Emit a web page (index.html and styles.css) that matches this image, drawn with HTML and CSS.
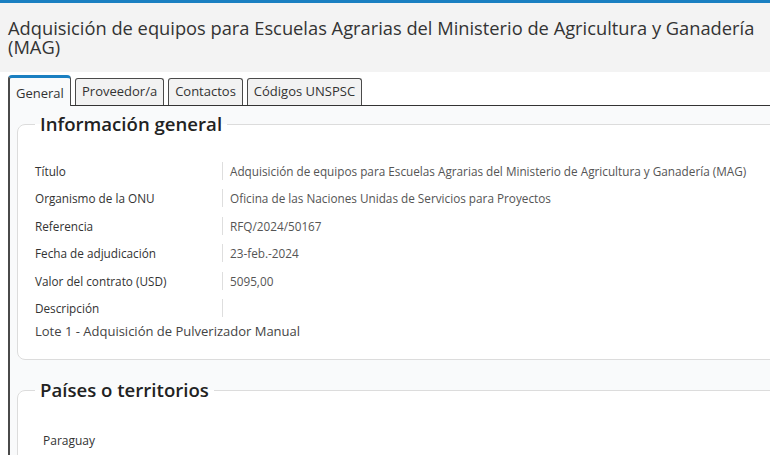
FILE: index.html
```html
<!DOCTYPE html>
<html lang="es">
<head>
<meta charset="utf-8">
<title>Adquisición de equipos</title>
<link rel="stylesheet" href="styles.css">
</head>
<body>
<div class="topbar"></div>
<header class="header">
  <h1 class="title">Adquisición de equipos para Escuelas Agrarias del Ministerio de Agricultura y Ganadería (MAG)</h1>
</header>
<nav class="tabs">
  <div class="tab active">General</div>
  <div class="tab">Proveedor/a</div>
  <div class="tab">Contactos</div>
  <div class="tab">Códigos UNSPSC</div>
</nav>
<main class="panel">
  <fieldset class="box">
    <legend class="legend">Información general</legend>
    <div class="rows">
      <div class="row"><div class="label">Título</div><div class="value">Adquisición de equipos para Escuelas Agrarias del Ministerio de Agricultura y Ganadería (MAG)</div></div>
      <div class="row"><div class="label">Organismo de la ONU</div><div class="value">Oficina de las Naciones Unidas de Servicios para Proyectos</div></div>
      <div class="row"><div class="label">Referencia</div><div class="value">RFQ/2024/50167</div></div>
      <div class="row"><div class="label">Fecha de adjudicación</div><div class="value">23-feb.-2024</div></div>
      <div class="row"><div class="label">Valor del contrato (USD)</div><div class="value">5095,00</div></div>
      <div class="row"><div class="label">Descripción</div><div class="value"></div></div>
    </div>
    <p class="desc">Lote 1 - Adquisición de Pulverizador Manual</p>
  </fieldset>
  <fieldset class="box box2">
    <legend class="legend">Países o territorios</legend>
    <ul class="countries">
      <li>Paraguay</li>
    </ul>
  </fieldset>
</main>
</body>
</html>
```

FILE: styles.css
```css
html, body {
  margin: 0;
  padding: 0;
  overflow: hidden;
  background: #ffffff;
}
body {
  font-family: "Open Sans", "DejaVu Sans", sans-serif;
  color: #333;
  width: 770px;
  height: 455px;
}
.topbar {
  height: 3px;
  background: #1a7fc1;
}
.header {
  background: #f3f3f3;
  padding: 15px 8px 16px 8px;
}
.title {
  margin: 0;
  font-size: 18.3px;
  font-weight: 400;
  line-height: 19px;
  color: #333;
}
.tabs {
  display: flex;
  align-items: flex-end;
  gap: 4px;
  margin: 3px 0 0 8px;
  height: 30px;
  position: relative;
  z-index: 2;
}
.tab {
  box-sizing: border-box;
  height: 27px;
  line-height: 25px;
  padding: 0 6px;
  font-size: 13px;
  color: #333;
  background: #f2f2f2;
  border: 1px solid #4a4a4a;
  border-bottom: none;
  border-radius: 3px 3px 0 0;
}
.tab.active {
  height: 31px;
  margin-bottom: -1px;
  padding-top: 3px;
  border-left: 2px solid #4a4a4a;
  border-top: 3px solid #1a7fc1;
  background: #f9fafb;
  border-radius: 4px 4px 0 0;
  padding-left: 6px;
  width: 63px;
}
.panel {
  border-top: 1px solid #333;
  border-left: 2px solid #4a4a4a;
  margin-left: 8px;
  margin-right: -60px;
  background: #f9fafb;
  padding: 5px 0 40px 7px;
  position: relative;
  z-index: 1;
}
.box {
  margin: 0;
  border: 1px solid #dcdcdc;
  border-radius: 8px;
  background: #ffffff;
  padding: 20px 0 19px 17px;
}
.box2 {
  margin-top: 17px;
  padding-top: 29px;
}
.legend {
  font-size: 18.6px;
  font-weight: 600;
  line-height: 26px;
  color: #222;
  padding: 0 5px;
}
.row {
  display: grid;
  grid-template-columns: 187px 1fr;
  align-items: center;
  height: 27.5px;
  font-size: 11.75px;
}
.label {
  color: #333;
  line-height: 18px;
}
.value {
  border-left: 1px solid #dedede;
  padding-left: 7px;
  line-height: 18px;
  min-height: 18px;
  color: #555;
}
.desc {
  margin: 0;
  font-size: 13px;
  line-height: 18px;
  color: #444;
}
.countries {
  list-style: none;
  margin: 0;
  padding: 0 0 0 8px;
  font-size: 12px;
  line-height: 18px;
  color: #333;
}
```
